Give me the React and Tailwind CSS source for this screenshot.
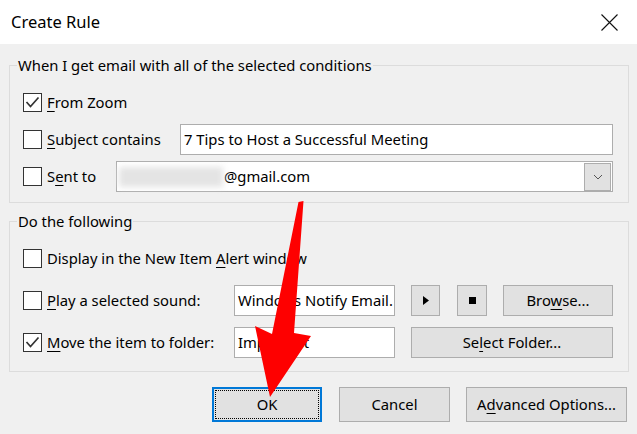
import React from "react";

function Check({ checked }) {
  return (
    <span className="w-[19px] h-[19px] border border-[#333333] bg-white flex items-center justify-center shrink-0">
      {checked && (
        <svg width="17" height="17" viewBox="0 0 17 17">
          <path d="M2.5 8 L6.5 12.5 L14.5 3.5" fill="none" stroke="#333333" strokeWidth="1.7" />
        </svg>
      )}
    </span>
  );
}

function U({ children }) {
  return <span className="underline underline-offset-[3px] decoration-1">{children}</span>;
}

function Btn({ className = "", children }) {
  return (
    <div
      className={
        "h-[31px] bg-[#e1e1e1] border border-[#adadad] flex items-center justify-center shrink-0 " + className
      }
    >
      {children}
    </div>
  );
}

function TextBox({ className = "", children }) {
  return (
    <div
      className={
        "h-[31px] bg-white border border-[#adadad] flex items-center pl-[3px] overflow-hidden whitespace-nowrap shrink-0 " +
        className
      }
    >
      {children}
    </div>
  );
}

export default function App() {
  return (
    <div className="relative w-[637px] h-[434px] bg-[#f0f0f0] overflow-hidden text-black text-[14.8px] font-['Noto_Sans','Liberation_Sans',sans-serif]">
      {/* Title bar */}
      <div className="h-[44px] bg-white flex items-center justify-between pl-[11px] pr-[19px]">
        <span className="text-[16.5px]">Create Rule</span>
        <svg width="17" height="17" viewBox="0 0 17 17">
          <path d="M0.5 0.5 L16.5 16.5 M16.5 0.5 L0.5 16.5" stroke="#111" strokeWidth="1.1" fill="none" />
        </svg>
      </div>

      <div className="pl-[9px] pr-[8px] pt-[10px] flex flex-col">
        {/* Group 1 */}
        <fieldset className="border border-[#dcdcdc] p-0 m-0 min-w-0">
          <legend className="ml-[7px] px-[1px] leading-[22px]">When I get email with all of the selected conditions</legend>
          <div className="flex flex-col gap-[6px] pl-[13px] pr-[15px] pt-[11px] pb-[10px]">
            <div className="h-[31px] flex items-center gap-[5px]">
              <Check checked />
              <span>
                <U>F</U>rom Zoom
              </span>
            </div>
            <div className="h-[31px] flex items-center gap-[5px]">
              <Check />
              <span>
                <U>S</U>ubject contains
              </span>
              <TextBox className="ml-auto w-[433px]">7 Tips to Host a Successful Meeting</TextBox>
            </div>
            <div className="h-[31px] flex items-center gap-[5px]">
              <Check />
              <span>
                S<U>e</U>nt to
              </span>
              <div className="ml-auto w-[497px] h-[31px] bg-white border border-[#adadad] flex items-center pl-[2px] pr-[1px]">
                <span className="w-[104px] h-[20px] bg-[#e4e4e4] blur-[3px] shrink-0"></span>
                <span className="ml-[1px]">@gmail.com</span>
                <div className="ml-auto w-[27px] h-[28px] bg-[#e1e1e1] border border-[#adadad] flex items-center justify-center">
                  <svg width="10" height="6" viewBox="0 0 10 6">
                    <path d="M1 1 L5 5 L9 1" fill="none" stroke="#555" strokeWidth="1" />
                  </svg>
                </div>
              </div>
            </div>
          </div>
        </fieldset>

        {/* Group 2 */}
        <fieldset className="mt-[7px] border border-[#dcdcdc] p-0 m-0 min-w-0">
          <legend className="ml-[7px] px-[1px] leading-[22px]">Do the following</legend>
          <div className="flex flex-col gap-[11px] pl-[13px] pr-[15px] pt-[11px] pb-[13px]">
            <div className="h-[31px] flex items-center gap-[5px]">
              <Check />
              <span>
                Display in the New Item <U>A</U>lert window
              </span>
            </div>
            <div className="h-[31px] flex items-center gap-[5px]">
              <Check />
              <span>
                <U>P</U>lay a selected sound:
              </span>
              <div className="ml-auto flex items-center">
                <TextBox className="w-[161px]">Windows Notify Email.</TextBox>
                <Btn className="ml-[16px] w-[29px]">
                  <svg width="6" height="9" viewBox="0 0 6 9">
                    <path d="M0 0 L6 4.5 L0 9 Z" fill="#000" />
                  </svg>
                </Btn>
                <Btn className="ml-[17px] w-[30px]">
                  <span className="w-[7px] h-[7px] bg-black"></span>
                </Btn>
                <Btn className="ml-[16px] w-[110px]">
                  <span>
                    Bro<U>w</U>se...
                  </span>
                </Btn>
              </div>
            </div>
            <div className="h-[31px] flex items-center gap-[5px]">
              <Check checked />
              <span>
                <U>M</U>ove the item to folder:
              </span>
              <div className="ml-auto flex items-center">
                <TextBox className="w-[161px]">Important</TextBox>
                <Btn className="ml-[16px] w-[202px]">
                  <span>
                    Se<U>l</U>ect Folder...
                  </span>
                </Btn>
              </div>
            </div>
          </div>
        </fieldset>

        {/* Bottom buttons */}
        <div className="mt-[15px] flex justify-end pr-[2px]">
          <div className="w-[110px] h-[35px] bg-[#e1e1e1] border-2 border-[#0078d7] p-[1px]">
            <div className="w-full h-full border border-dotted border-black flex items-center justify-center">OK</div>
          </div>
          <div className="ml-[17px] w-[111px] h-[35px] bg-[#e1e1e1] border border-[#adadad] flex items-center justify-center">
            Cancel
          </div>
          <div className="ml-[16px] w-[161px] h-[35px] bg-[#e1e1e1] border border-[#adadad] flex items-center justify-center">
            <span>
              A<U>d</U>vanced Options...
            </span>
          </div>
        </div>
      </div>

      {/* Red arrow overlay */}
      <svg className="absolute inset-0 pointer-events-none" width="637" height="434" viewBox="0 0 637 434">
        <polygon
          points="298.5,202 303.5,201 294,333 311,336 270,397 255,326 272,334"
          fill="#fe0000"
        />
      </svg>
    </div>
  );
}
